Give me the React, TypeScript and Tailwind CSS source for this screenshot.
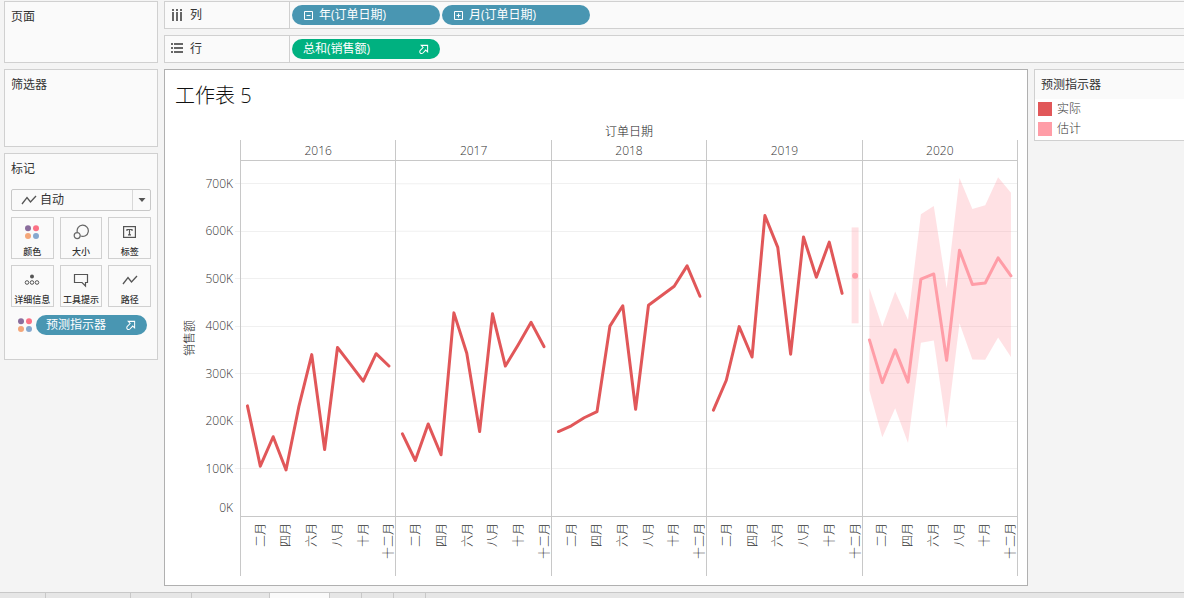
import React, { useState } from 'react';

const YEARS = [
  { year: '2016', actual: [232, 105, 167, 97, 231, 340, 140, 355, 320, 284, 342, 316] },
  { year: '2017', actual: [173, 117, 194, 129, 428, 343, 178, 426, 316, 361, 408, 357] },
  { year: '2018', actual: [178, 190, 207, 220, 400, 443, 225, 444, 464, 484, 527, 463] },
  { year: '2019', actual: [223, 286, 399, 335, 633, 566, 341, 588, 503, 577, 469] },
  { year: '2020', actual: [] },
];

const FORECAST = {
  estimate: [371, 281, 350, 282, 499, 510, 328, 560, 488, 491, 544, 506],
  upper: [480, 399, 473, 413, 636, 653, 480, 712, 647, 655, 714, 681],
  lower: [264, 166, 227, 154, 365, 370, 185, 406, 330, 329, 376, 335],
};

const MONTHS = ['二月', '四月', '六月', '八月', '十月', '十二月'];
const TICKS = [700, 600, 500, 400, 300, 200, 100];
const Y_MAX = 748;

const toPoint = (v: number, i: number) => `${i + 0.5},${Y_MAX - v}`;
const toPoints = (values: number[]) => values.map(toPoint).join(' ');

function ColorDots() {
  return (
    <svg className="w-4 h-4" viewBox="0 0 16 16">
      <circle cx="4" cy="4.2" r="3" fill="#8a6d9c" />
      <circle cx="12" cy="4.2" r="3" fill="#fb7185" />
      <circle cx="4" cy="12" r="3" fill="#f4a77a" />
      <circle cx="12" cy="12" r="3" fill="#85a8cf" />
    </svg>
  );
}

function LineIcon() {
  return (
    <svg className="w-4 h-4" viewBox="0 0 16 16" fill="none" stroke="#555" strokeWidth="1.3">
      <path d="M1 12 L6 5.5 L9.5 10 L15 4" />
    </svg>
  );
}

function SizeIcon() {
  return (
    <svg className="w-4 h-4" viewBox="0 0 16 16" fill="none" stroke="#666" strokeWidth="1.2">
      <path d="M4.3 8.2 A5.6 5.6 0 1 1 7.6 12" />
      <circle cx="4.2" cy="11.6" r="3" />
    </svg>
  );
}

function LabelIcon() {
  return (
    <svg className="w-4 h-4" viewBox="0 0 16 16" fill="none" stroke="#555" strokeWidth="1.2">
      <rect x="1.6" y="2.6" width="11.8" height="10.8" />
      <path d="M5 7 V5.5 H10 V7 M7.5 5.5 V10.8 M6 10.8 H9" />
    </svg>
  );
}

function DetailIcon() {
  return (
    <svg className="w-4 h-4" viewBox="0 0 16 16" fill="none" stroke="#555" strokeWidth="1">
      <circle cx="8" cy="4.5" r="2" fill="#555" stroke="none" />
      <circle cx="3" cy="10.5" r="1.8" />
      <circle cx="8" cy="10.5" r="1.8" />
      <circle cx="13" cy="10.5" r="1.8" />
    </svg>
  );
}

function TooltipIcon() {
  return (
    <svg className="w-4 h-4" viewBox="0 0 16 16" fill="none" stroke="#555" strokeWidth="1.2">
      <path d="M1.5 2.5 H14.5 V10.5 H12.5 V14 L9 10.5 H1.5 Z" />
    </svg>
  );
}

function ForecastArrow() {
  return (
    <svg className="w-[11px] h-[11px] shrink-0" viewBox="0 0 12 12" fill="none" stroke="white" strokeWidth="1.1">
      <path d="M3.5 1.5 H10.5 V8.5 L8.4 6.6 L5.4 9.8 A1.9 1.9 0 1 1 2.5 7 L5.6 3.8 Z" />
    </svg>
  );
}

function ExpandBox({ open }: { open: boolean }) {
  return (
    <svg className="w-3 h-3 shrink-0" viewBox="0 0 12 12" fill="none" stroke="white">
      <path d={open ? 'M1.5 2.5 H9.5 V10.5 H1.5 Z M3.5 6.5 H7.5' : 'M1.5 2.5 H9.5 V10.5 H1.5 Z M3.5 6.5 H7.5 M5.5 4.5 V8.5'} />
    </svg>
  );
}

const MARK_BUTTONS = [
  { label: '颜色', icon: <ColorDots /> },
  { label: '大小', icon: <SizeIcon /> },
  { label: '标签', icon: <LabelIcon /> },
  { label: '详细信息', icon: <DetailIcon /> },
  { label: '工具提示', icon: <TooltipIcon /> },
  { label: '路径', icon: <LineIcon /> },
];

function Sidebar() {
  const [mark, setMark] = useState('auto');

  return (
    <aside className="w-[154px] shrink-0 flex flex-col gap-1.5">
      <section className="h-[62px] border border-[#d0d0d0] bg-[#fafafa] px-1.5 pt-[7px]">
        <h2 className="leading-4">页面</h2>
      </section>
      <section className="h-[78px] border border-[#d0d0d0] bg-[#fafafa] px-1.5 pt-[7px]">
        <h2 className="leading-4">筛选器</h2>
      </section>
      <section className="border border-[#d0d0d0] bg-[#fafafa] px-1.5 pt-[7px] pb-6">
        <h2 className="leading-4">标记</h2>

        {/* Mark type */}
        <div className="relative mt-3">
          <select
            aria-label="标记类型"
            value={mark}
            onChange={(e) => setMark(e.target.value)}
            className="block w-full h-[22px] appearance-none border border-[#c8c8c8] rounded-xs bg-[#fafafa] pl-7 leading-4 text-[#333]"
          >
            <option value="auto">自动</option>
            <option value="line">线</option>
          </select>
          <span className="absolute left-2.5 top-[3px] pointer-events-none">
            <LineIcon />
          </span>
          <span className="absolute right-px top-px bottom-px w-[18px] border-l border-[#d8d8d8] flex items-center justify-center pointer-events-none">
            <svg className="w-2 h-1" viewBox="0 0 8 4" fill="#555">
              <path d="M0.5 0 H7.5 L4 4 Z" />
            </svg>
          </span>
        </div>

        <div className="grid grid-cols-3 gap-1.5 mt-1.5">
          {MARK_BUTTONS.map((b) => (
            <button
              key={b.label}
              className="h-[42px] border border-[#d0d0d0] bg-[#fafafa] flex flex-col items-center justify-between pt-1.5 text-[9px] leading-3 font-medium whitespace-nowrap"
            >
              {b.icon}
              {b.label}
            </button>
          ))}
        </div>

        <div className="flex items-center mt-2 pl-1.5 pr-1 gap-[3px]">
          <ColorDots />
          <button className="flex-1 h-5 rounded-full bg-[#4996b2] text-white pl-2.5 pr-[11px] flex items-center justify-between">
            预测指示器
            <ForecastArrow />
          </button>
        </div>
      </section>
    </aside>
  );
}

function Shelves() {
  return (
    <>
      <section className="h-7 shrink-0 flex border border-r-0 border-[#d0d0d0] bg-[#fafafa]">
        <div className="w-[125px] shrink-0 border-r border-[#d0d0d0] flex items-center gap-[7px] pl-1.5">
          <svg className="w-3 h-3" viewBox="0 0 12 12" fill="#666">
            <path d="M1 0h2v2H1z M5 0h2v2H5z M9 0h2v2H9z M1 3h2v9H1z M5 3h2v9H5z M9 3h2v9H9z" />
          </svg>
          列
        </div>
        <div className="flex items-center gap-0.5 pl-0.5">
          <button className="w-[148px] h-5 rounded-full bg-[#4996b2] text-white flex items-center gap-1 px-[11px]">
            <ExpandBox open />
            年(订单日期)
          </button>
          <button className="w-[148px] h-5 rounded-full bg-[#4996b2] text-white flex items-center gap-1 px-[11px]">
            <ExpandBox open={false} />
            月(订单日期)
          </button>
        </div>
      </section>
      <section className="h-7 shrink-0 flex border border-r-0 border-[#d0d0d0] bg-[#fafafa]">
        <div className="w-[125px] shrink-0 border-r border-[#d0d0d0] flex items-center gap-[7px] pl-1.5">
          <svg className="w-3 h-3" viewBox="0 0 12 12" fill="#666">
            <path d="M0 0h2v2H0z M0 4h2v2H0z M0 8h2v2H0z M3 0h9v2H3z M3 4h9v2H3z M3 8h9v2H3z" />
          </svg>
          行
        </div>
        <div className="flex items-center pl-0.5">
          <button className="w-[148px] h-5 rounded-full bg-[#00b180] text-white flex items-center justify-between px-[11px]">
            总和(销售额)
            <ForecastArrow />
          </button>
        </div>
      </section>
    </>
  );
}

function PanePlot({ year, actual }: { year: string; actual: number[] }) {
  const { estimate, upper, lower } = FORECAST;

  return (
    <svg className="block w-full h-full" viewBox={`0 0 12 ${Y_MAX}`} preserveAspectRatio="none" fill="none">
      {TICKS.map((t) => (
        <path
          key={t}
          d={`M0 ${Y_MAX - t} H12`}
          stroke="#f0f0f0"
          vectorEffect="non-scaling-stroke"
          shapeRendering="crispEdges"
        />
      ))}
      {/* December 2019 is the first forecast month, it stands alone in its pane */}
      {year === '2019' && (
        <>
          <rect x="11.24" y={Y_MAX - 608} width="0.54" height="202" fill="#ff9da7" fillOpacity="0.3" />
          <path
            d={`M11.51 ${Y_MAX - 506} h0.001`}
            stroke="#ff9da7"
            strokeWidth="6"
            strokeLinecap="round"
            vectorEffect="non-scaling-stroke"
          />
        </>
      )}
      {year === '2020' && (
        <>
          <polygon
            points={`${toPoints(upper)} ${lower.map(toPoint).reverse().join(' ')}`}
            fill="#ff9da7"
            fillOpacity="0.3"
          />
          <polyline
            points={toPoints(estimate)}
            stroke="#ff9da7"
            strokeWidth="3"
            strokeLinecap="round"
            strokeLinejoin="round"
            vectorEffect="non-scaling-stroke"
          />
        </>
      )}
      <polyline
        points={toPoints(actual)}
        stroke="#e15759"
        strokeWidth="3"
        strokeLinecap="round"
        strokeLinejoin="round"
        vectorEffect="non-scaling-stroke"
      />
    </svg>
  );
}

function Worksheet() {
  return (
    <main className="flex-1 min-w-0 flex flex-col bg-white border border-[#b0b0b0] pb-[9px] pr-[9px]">
      <h1 className="pl-2.5 pt-[11px] text-[20px] leading-[30px] font-light text-[#111]">工作表 5</h1>

      <div className="flex-1 min-h-0 flex mt-3 text-[#333] font-light">
        {/* Value axis */}
        <div className="w-[75px] shrink-0 flex pt-[38px] pb-[60px]">
          <div className="w-9 pl-3.5 flex items-center justify-center">
            <span className="[writing-mode:vertical-rl] [text-orientation:sideways] rotate-180 leading-4 text-[#222]">
              销售额
            </span>
          </div>
          <div className="flex-1 flex flex-col">
            <div className="grow-[48] basis-0" />
            {TICKS.map((t) => (
              <div key={t} className="grow-[100] basis-0 min-h-0 flex flex-col justify-between">
                <div className="h-0 flex items-center justify-end gap-0.5">
                  {t}K
                  <span className="w-[5px] h-px bg-[#f0f0f0]" />
                </div>
                {t === 100 && <div className="pr-[7px] text-right leading-4">0K</div>}
              </div>
            ))}
          </div>
        </div>

        {/* Year panes */}
        <div className="flex-1 min-w-0 flex flex-col">
          <div className="h-[17px] text-center leading-[17px] text-[#222]">订单日期</div>
          <div className="flex-1 min-h-0 grid grid-cols-5 border-r border-[#c8c8c8]">
            {YEARS.map((y) => (
              <div key={y.year} className="min-w-0 min-h-0 flex flex-col border-l border-[#c8c8c8]">
                <div className="h-[21px] shrink-0 border-b border-[#c8c8c8] text-center leading-[22px]">{y.year}</div>
                <div className="flex-1 min-h-0">
                  <PanePlot year={y.year} actual={y.actual} />
                </div>
                <div className="h-[60px] shrink-0 border-t border-[#c8c8c8] grid grid-cols-6 pt-1.5">
                  {MONTHS.map((m) => (
                    <div key={m} className="flex items-start justify-end">
                      <span className="[writing-mode:vertical-rl] [text-orientation:sideways] rotate-180 leading-[13px] whitespace-nowrap">
                        {m}
                      </span>
                    </div>
                  ))}
                </div>
              </div>
            ))}
          </div>
        </div>
      </div>
    </main>
  );
}

function Legend() {
  return (
    <aside className="w-[150px] shrink-0 self-start border border-r-0 border-[#d0d0d0] bg-white">
      <h2 className="bg-[#fafafa] pl-1.5 py-1.5 leading-[17px]">预测指示器</h2>
      <ul className="pl-[3px] pt-[3px] pb-1 flex flex-col gap-1.5 text-[#333] font-light">
        <li className="flex items-center gap-[5px] leading-[14px]">
          <span className="w-3.5 h-3.5 bg-[#e15759]" />
          实际
        </li>
        <li className="flex items-center gap-[5px] leading-[14px]">
          <span className="w-3.5 h-3.5 bg-[#ff9da7]" />
          估计
        </li>
      </ul>
    </aside>
  );
}

function SheetTabs() {
  return (
    <footer className="h-1.5 mt-1.5 shrink-0 flex border-t border-[#c8c8c8] bg-[#e6e6e6]">
      <div className="w-[46px] border-r border-[#c8c8c8]" />
      <div className="w-[85px] border-r border-[#c8c8c8]" />
      <div className="w-[61px] border-r border-[#c8c8c8]" />
      <div className="w-[78px] border-r border-[#c8c8c8]" />
      <div className="w-[60px] border-r border-[#c8c8c8] bg-[#fafafa]" />
      <div className="w-8 border-r border-[#c8c8c8]" />
      <div className="w-8 border-r border-[#c8c8c8]" />
      <div className="w-8 border-r border-[#c8c8c8]" />
    </footer>
  );
}

export default function App() {
  return (
    <div className="h-screen flex flex-col overflow-hidden bg-[#f4f4f4] pt-px font-['Open_Sans','Noto_Sans_CJK_SC',sans-serif] text-[12px] text-[#333]">
      <div className="flex-1 min-h-0 flex gap-1.5 pl-1">
        <Sidebar />
        <div className="flex-1 min-w-0 flex flex-col gap-1.5">
          <Shelves />
          <div className="flex-1 min-h-0 flex gap-1.5">
            <Worksheet />
            <Legend />
          </div>
        </div>
      </div>
      <SheetTabs />
    </div>
  );
}
